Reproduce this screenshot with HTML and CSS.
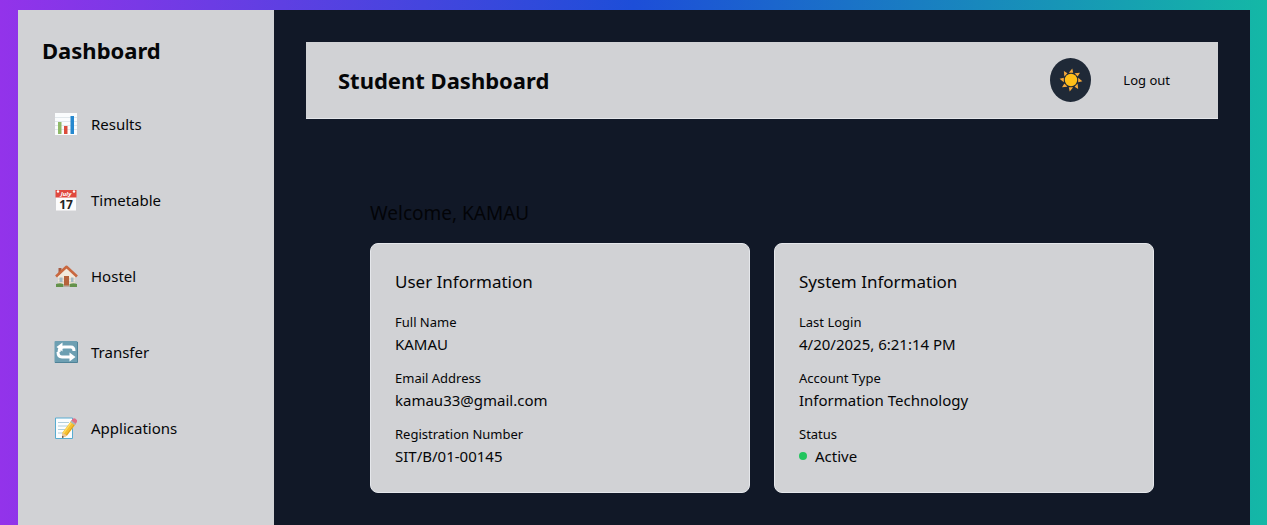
FILE: index.html
```html
<!DOCTYPE html>
<html lang="en">
<head>
<meta charset="utf-8">
<meta name="viewport" content="width=device-width, initial-scale=1">
<title>Student Dashboard</title>
<link rel="stylesheet" href="styles.css">
</head>
<body>
<div class="shell">
  <aside class="sidebar">
    <h2 class="title">Dashboard</h2>
    <nav class="nav">
      <a class="nav-link" href="#results">
        <svg class="icon" viewBox="0 0 24 24" aria-hidden="true"><rect x="1" y="1" width="22" height="22" fill="#fafcfd"/><path d="M1 5.500h22M1 9.500h22M1 13.500h22M1 17.500h22" stroke="#d5dfe4" stroke-width=".7"/><path d="M4 10h3.500v12H4z" fill="#8fb969"/><path d="M10 14h3.500v8H10z" fill="#dc4c3c"/><path d="M16.500 4H20v18h-3.500z" fill="#2588cf"/></svg>
        <span>Results</span>
      </a>
      <a class="nav-link" href="#timetable">
        <svg class="icon" viewBox="0 0 24 24" aria-hidden="true"><path d="M2 8h20v14.500H2z" fill="#fcfcfc"/><path d="M1.500 2h21v7.500h-21z" fill="#e0483e"/><circle cx="4" cy="3.500" r="1.200" fill="#fff"/><circle cx="20" cy="3.500" r="1.200" fill="#fff"/><text class="month" x="12" y="8">July</text><text class="day" x="12" y="20.500">17</text></svg>
        <span>Timetable</span>
      </a>
      <a class="nav-link" href="#hostel">
        <svg class="icon" viewBox="0 0 24 24" aria-hidden="true"><path d="M4.500 4h3v7h-3z" fill="#a65b41"/><path d="M4 12 12.500 4 21 12v9.500H4z" fill="#f1e9dc"/><path d="M4 15h17M4 18h17" stroke="#cfc3b5" stroke-width=".7"/><path d="M10 12h5v10h-5z" fill="#b5633c"/><path d="M5.500 13.500h3V18h-3zM17 13.500h2.500V18H17z" fill="#a3bac4"/><path d="m2 12.500 10.500-9.700L23 12.500" fill="none" stroke="#c9683f" stroke-width="2.600" stroke-linejoin="round"/><path d="M2 20q4-1.500 7.500 0v3H2zM15.500 20q4-1.500 7.500 0v3h-7.500z" fill="#64924b"/><path d="M9.500 21.500h6V23h-6z" fill="#b9aca4"/></svg>
        <span>Hostel</span>
      </a>
      <a class="nav-link" href="#transfer">
        <svg class="icon" viewBox="0 0 24 24" aria-hidden="true"><rect x=".5" y="1" width="23" height="22" rx="1" fill="#6d9fb2"/><path d="M1 22.500h22.500V2" fill="none" stroke="#4f8297"/><path d="M5 12q0-5 5-5h7q3 0 3 4" fill="none" stroke="#fff" stroke-width="3"/><path d="M8.500 2.500v9L2.500 7z" fill="#fff"/><path d="M4 12q0 5 4 5h8" fill="none" stroke="#fff" stroke-width="3"/><path d="M15.500 12.500v9l6-4.500z" fill="#fff"/></svg>
        <span>Transfer</span>
      </a>
      <a class="nav-link" href="#applications">
        <svg class="icon" viewBox="0 0 24 24" aria-hidden="true"><path d="M1.500 2h17v20.500h-17z" fill="#fbfdfe" stroke="#58acd0"/><path d="M4 6.500h11M4 10h10M4 13.500h8M4 17h5" stroke="#a8c9d8" stroke-width=".9"/><path d="m8.500 16.500 9-12 4.500 3.300-9 12-5 2.200z" fill="#f5c02f"/><path d="m9.500 17.200 9-12" stroke="#ffdc65" stroke-width="1.300"/><path d="m12.300 19.300 9-12" stroke="#d99b22"/><path d="m8.500 16.500 4.500 3.300-5 2.200z" fill="#ecc79c"/><path d="m8.300 19.800 1.700 1.300-2 1z" fill="#424242"/><path d="m17 5 1.600-2.100q1.200-1.400 3-.1 2.200 1.500 1.400 3L21.500 8.200z" fill="#df6d87"/><path d="m16.300 5.900 1-1.400 4.500 3.300-1 1.400z" fill="#a8b7bd"/></svg>
        <span>Applications</span>
      </a>
    </nav>
  </aside>
  <main class="main">
    <header class="header">
      <h1 class="title">Student Dashboard</h1>
      <div class="actions">
        <button class="theme" type="button" aria-label="Toggle theme">
          <svg class="icon" viewBox="0 0 24 24" aria-hidden="true"><g fill="#f4a83d"><path id="ray" d="m9.800 4.800L14.200 4.800 13.300 0.600z"/><use href="#ray" transform="rotate(45 12 12)"/><use href="#ray" transform="rotate(90 12 12)"/><use href="#ray" transform="rotate(135 12 12)"/><use href="#ray" transform="rotate(180 12 12)"/><use href="#ray" transform="rotate(225 12 12)"/><use href="#ray" transform="rotate(270 12 12)"/><use href="#ray" transform="rotate(315 12 12)"/></g><circle cx="12" cy="12" r="6.200" fill="#ffbe18"/></svg>
        </button>
        <button class="logout" type="button">Log out</button>
      </div>
    </header>
    <section class="content">
      <h2 class="welcome">Welcome, KAMAU</h2>
      <div class="cards">
        <article class="card">
          <h3 class="card-title">User Information</h3>
          <dl class="facts">
            <div><dt>Full Name</dt><dd>KAMAU</dd></div>
            <div><dt>Email Address</dt><dd>kamau33@gmail.com</dd></div>
            <div><dt>Registration Number</dt><dd>SIT/B/01-00145</dd></div>
          </dl>
        </article>
        <article class="card">
          <h3 class="card-title">System Information</h3>
          <dl class="facts">
            <div><dt>Last Login</dt><dd>4/20/2025, 6:21:14 PM</dd></div>
            <div><dt>Account Type</dt><dd>Information Technology</dd></div>
            <div><dt>Status</dt><dd class="status"><span class="dot"></span>Active</dd></div>
          </dl>
        </article>
      </div>
    </section>
  </main>
</div>
</body>
</html>
```
FILE: styles.css
```css
* { box-sizing: border-box; margin: 0; padding: 0; }

body {
  min-height: 100vh;
  display: flex;
  padding: 10px 17px 0 18px;
  background: linear-gradient(to right, #9333ea, #1d4ed8, #14b8a6);
  color: #050608;
  font: 15px/24px "Noto Sans", "Open Sans", sans-serif;
}

button { border: 0; color: inherit; font: inherit; cursor: pointer; }

.shell { flex: 1; display: flex; background: #111827; }

.sidebar { width: 256px; flex: none; padding: 24px; background: #d1d2d5; }

.title { font-size: 22px; line-height: 32px; font-weight: 700; }

.nav { display: grid; gap: 28px; margin-top: 34px; }

.nav-link {
  display: flex;
  align-items: center;
  gap: 13px;
  padding: 12px;
  color: inherit;
  text-decoration: none;
}

.icon { width: 24px; height: 24px; flex: none; }

.month { font: italic 700 6px "Noto Sans", sans-serif; fill: #fff; text-anchor: middle; }
.day { font: 700 12px "Noto Sans", sans-serif; fill: #222; text-anchor: middle; }

.main { flex: 1; padding: 32px; }

.header {
  display: flex;
  align-items: center;
  justify-content: space-between;
  padding: 16px 32px;
  background: #d1d2d5;
  border-bottom: 1px solid #e5e7eb;
}

.actions { display: flex; align-items: center; gap: 16px; }

.theme {
  display: grid;
  place-items: center;
  width: 41px;
  height: 44px;
  border-radius: 50%;
  background: #1f2937;
}

.logout { padding: 8px 16px; background: none; font-size: 13px; line-height: 20px; }

.content { padding: 80px 64px 0; }

.welcome { font-size: 19px; line-height: 28px; font-weight: 400; color: #030407; }

.cards { display: grid; grid-template-columns: 1fr 1fr; gap: 24px; margin-top: 16px; }

.card { padding: 24px; background: #d1d2d5; border: 1px solid #e5e7eb; border-radius: 8px; }

.card-title { font-size: 17px; line-height: 28px; font-weight: 400; }

.facts { display: grid; gap: 12px; margin-top: 16px; }
.facts dt { font-size: 13px; line-height: 20px; }

.status { display: flex; align-items: center; gap: 8px; }
.dot { width: 8px; height: 8px; border-radius: 50%; background: #22c55e; }
```
